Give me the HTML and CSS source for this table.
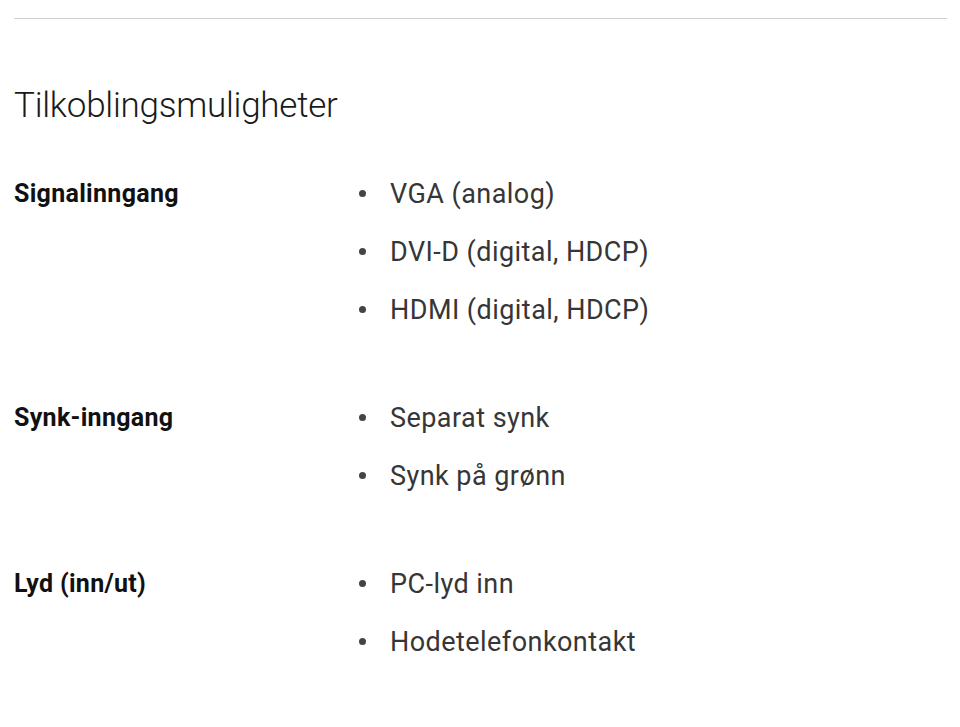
FILE: index.html
```html
<!DOCTYPE html>
<html lang="no">
<head>
<meta charset="utf-8">
<title>Tilkoblingsmuligheter</title>
<link rel="stylesheet" href="styles.css">
</head>
<body>
<div class="page">
  <div class="rule"></div>
  <h2 class="title">Tilkoblingsmuligheter</h2>
  <div class="specs">
    <div class="row">
      <div class="label">Signalinngang</div>
      <ul class="values">
        <li>VGA (analog)</li>
        <li>DVI-D (digital, HDCP)</li>
        <li>HDMI (digital, HDCP)</li>
      </ul>
    </div>
    <div class="row">
      <div class="label">Synk-inngang</div>
      <ul class="values">
        <li>Separat synk</li>
        <li>Synk på grønn</li>
      </ul>
    </div>
    <div class="row">
      <div class="label">Lyd (inn/ut)</div>
      <ul class="values">
        <li>PC-lyd inn</li>
        <li>Hodetelefonkontakt</li>
      </ul>
    </div>
  </div>
</div>
</body>
</html>
```
FILE: styles.css
```css
html, body {
  margin: 0;
  padding: 0;
  background: #fff;
}
body {
  font-family: Roboto, "Liberation Sans", sans-serif;
  color: #333;
}
.page {
  padding: 18px 13px 0 14px;
}
.rule {
  height: 1px;
  background: #d0d0d0;
}
.title {
  margin: 66px 0 0 0;
  font-weight: 300;
  font-size: 35px;
  line-height: 42px;
  color: #1a1a1a;
  letter-spacing: -0.25px;
}
.specs {
  margin-top: 38px;
  display: flex;
  flex-direction: column;
  gap: 50px;
}
.row {
  display: grid;
  grid-template-columns: 342px 1fr;
}
.label {
  font-weight: 700;
  font-size: 25px;
  line-height: 58px;
  letter-spacing: 0.3px;
  color: #111;
}
.values {
  margin: 0;
  padding: 0;
  list-style: none;
}
.values li {
  position: relative;
  padding-left: 34px;
  font-size: 27px;
  line-height: 58px;
  letter-spacing: 0.45px;
  color: #363636;
}
.values li::before {
  content: "";
  position: absolute;
  left: 3px;
  top: 25px;
  width: 7px;
  height: 7px;
  border-radius: 50%;
  background: #444;
}
```
